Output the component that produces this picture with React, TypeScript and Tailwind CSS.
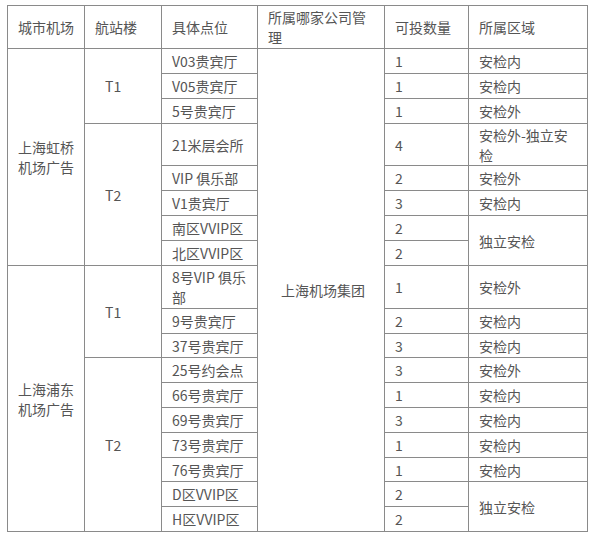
import React from 'react';

type Cell = {
  text: React.ReactNode;
  rowSpan?: number;
  className?: string;
};

type Row = {
  h: string;
  cells: Cell[];
};

const base = 'border border-[#8a8a8a] px-[10px] py-0 align-middle text-left leading-[20px]';

// Table rows, merged cells only appear in the row where they start
const rows: Row[] = [
  {
    h: 'h-[25px]',
    cells: [
      { text: <>上海虹桥<br />机场广告</>, rowSpan: 8 },
      { text: 'T1', rowSpan: 3, className: 'pl-[20px]' },
      { text: 'V03贵宾厅' },
      { text: '上海机场集团', rowSpan: 18, className: 'pl-[23px]' },
      { text: '1' },
      { text: '安检内' },
    ],
  },
  { h: 'h-[25px]', cells: [{ text: 'V05贵宾厅' }, { text: '1' }, { text: '安检内' }] },
  { h: 'h-[25px]', cells: [{ text: '5号贵宾厅' }, { text: '1' }, { text: '安检外' }] },
  {
    h: 'h-[42px]',
    cells: [
      { text: 'T2', rowSpan: 5, className: 'pl-[20px]' },
      { text: '21米层会所' },
      { text: '4' },
      { text: '安检外-独立安检' },
    ],
  },
  { h: 'h-[25px]', cells: [{ text: 'VIP 俱乐部' }, { text: '2' }, { text: '安检外' }] },
  { h: 'h-[25px]', cells: [{ text: 'V1贵宾厅' }, { text: '3' }, { text: '安检内' }] },
  {
    h: 'h-[25px]',
    cells: [{ text: '南区VVIP区' }, { text: '2' }, { text: '独立安检', rowSpan: 2 }],
  },
  { h: 'h-[25px]', cells: [{ text: '北区VVIP区' }, { text: '2' }] },
  {
    h: 'h-[43px]',
    cells: [
      { text: <>上海浦东<br />机场广告</>, rowSpan: 10 },
      { text: 'T1', rowSpan: 3, className: 'pl-[20px]' },
      { text: '8号VIP 俱乐部' },
      { text: '1' },
      { text: '安检外' },
    ],
  },
  { h: 'h-[25px]', cells: [{ text: '9号贵宾厅' }, { text: '2' }, { text: '安检内' }] },
  { h: 'h-[24px]', cells: [{ text: '37号贵宾厅' }, { text: '3' }, { text: '安检内' }] },
  {
    h: 'h-[25px]',
    cells: [
      { text: 'T2', rowSpan: 7, className: 'pl-[20px]' },
      { text: '25号约会点' },
      { text: '3' },
      { text: '安检外' },
    ],
  },
  { h: 'h-[25px]', cells: [{ text: '66号贵宾厅' }, { text: '1' }, { text: '安检内' }] },
  { h: 'h-[25px]', cells: [{ text: '69号贵宾厅' }, { text: '3' }, { text: '安检内' }] },
  { h: 'h-[25px]', cells: [{ text: '73号贵宾厅' }, { text: '1' }, { text: '安检内' }] },
  { h: 'h-[24px]', cells: [{ text: '76号贵宾厅' }, { text: '1' }, { text: '安检内' }] },
  {
    h: 'h-[25px]',
    cells: [{ text: 'D区VVIP区' }, { text: '2' }, { text: '独立安检', rowSpan: 2 }],
  },
  { h: 'h-[25px]', cells: [{ text: 'H区VVIP区' }, { text: '2' }] },
];

export default function App() {
  return (
    <div
      className="w-[600px] h-[537px] bg-white pt-[5px] pl-[7px] text-[14px] text-[#555]"
      style={{ fontFamily: '"Noto Sans CJK SC", "Noto Sans", sans-serif' }}
    >
      <table className="table-fixed border-collapse w-[580px]">
        <colgroup>
          <col className="w-[77px]" />
          <col className="w-[77px]" />
          <col className="w-[96px]" />
          <col className="w-[127px]" />
          <col className="w-[84px]" />
          <col className="w-[119px]" />
        </colgroup>
        <thead>
          <tr className="h-[43px]">
            <th className={`${base} font-normal`}>城市机场</th>
            <th className={`${base} font-normal`}>航站楼</th>
            <th className={`${base} font-normal`}>具体点位</th>
            <th className={`${base} font-normal`}>所属哪家公司管理</th>
            <th className={`${base} font-normal`}>可投数量</th>
            <th className={`${base} font-normal`}>所属区域</th>
          </tr>
        </thead>
        <tbody>
          {rows.map((row, i) => (
            <tr key={i} className={row.h}>
              {row.cells.map((c, j) => (
                <td key={j} rowSpan={c.rowSpan} className={`${base} ${c.className ?? ''}`}>
                  {c.text}
                </td>
              ))}
            </tr>
          ))}
        </tbody>
      </table>
    </div>
  );
}
